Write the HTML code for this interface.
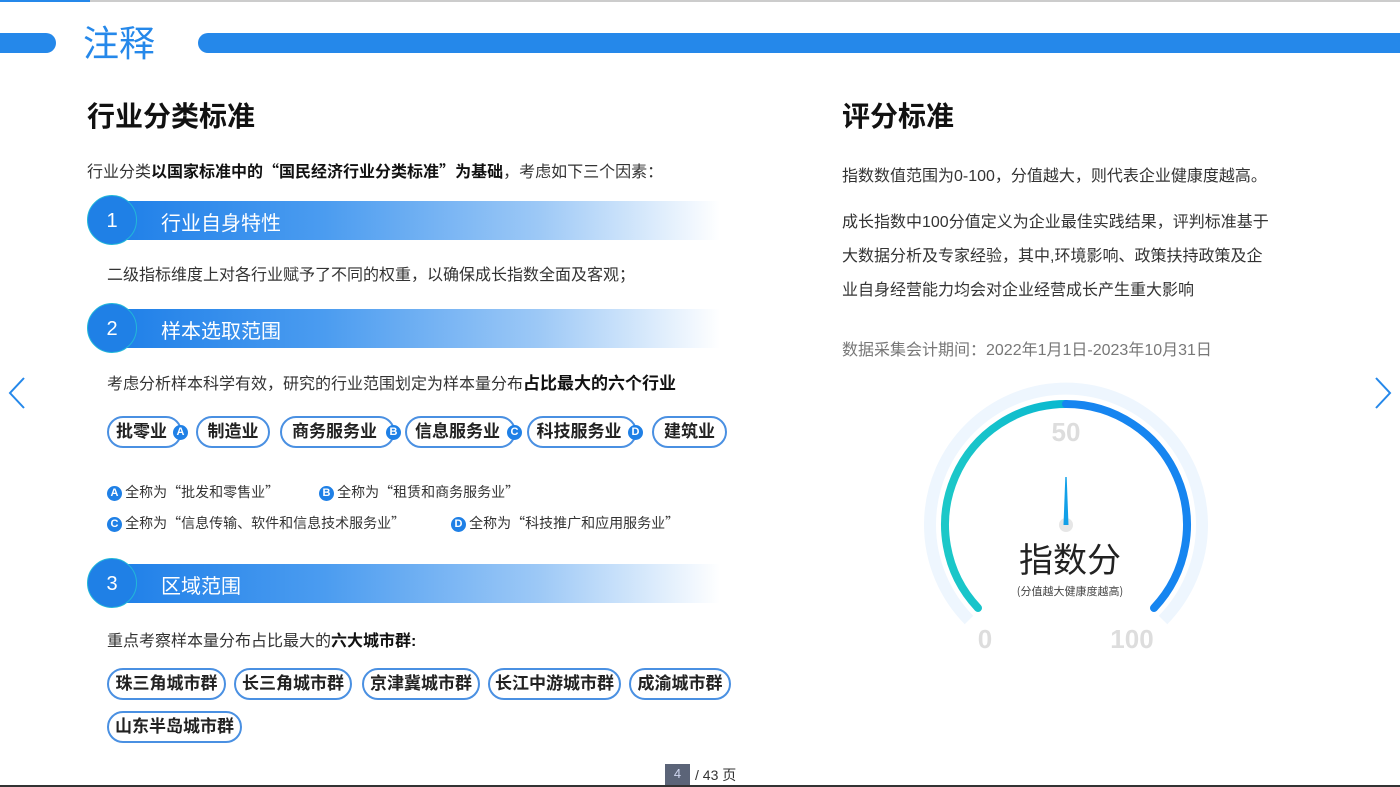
<!DOCTYPE html>
<html><head><meta charset="utf-8"><style>
*{margin:0;padding:0;box-sizing:border-box}
body{width:1400px;height:787px;overflow:hidden;background:#fff;position:relative;font-family:"Liberation Sans","Noto Sans CJK SC",sans-serif;color:#333}
.a{position:absolute;white-space:nowrap}
.h{font-size:28px;font-weight:bold;color:#111}
.p{font-size:16px;color:#333}
.q{font-family:"Noto Sans CJK SC",sans-serif}
.bar{position:absolute;left:112px;width:608px;height:39px;background:linear-gradient(90deg,#1e7fe8 0%,#4b9cf0 35%,#9cc8f6 70%,#fff 100%)}
.num{position:absolute;left:87px;width:50px;height:50px;border-radius:50%;background:#1f80e6;color:#fff;font-size:20px;text-align:center;line-height:50px;border:1px solid #22b8d8}
.bt{position:absolute;left:161px;color:#fff;font-size:20px}
.chip{position:absolute;height:32px;border:2px solid #4a90e2;border-radius:16px;font-size:17px;font-weight:bold;color:#222;text-align:center;line-height:28px}
.bd{display:inline-block;width:15px;height:15px;border-radius:50%;background:#1f80e6;color:#fff;font-size:11px;line-height:15px;text-align:center;font-weight:bold;vertical-align:1px;font-family:"Liberation Sans",sans-serif}
.chip .bd{position:absolute;right:-8px;top:7px}
.n{font-size:14px;color:#333;font-family:"Noto Sans CJK SC",sans-serif}
</style></head><body>
<div class="a" style="left:0;top:0;width:1400px;height:2px;background:#ccc"></div>
<div class="a" style="left:0;top:0;width:90px;height:2px;background:#2588ea"></div>
<div class="a" style="left:0;top:33px;width:56px;height:20px;background:#2588ea;border-radius:0 10px 10px 0"></div>
<div class="a" style="left:198px;top:33px;width:1202px;height:20px;background:#2588ea;border-radius:10px 0 0 10px"></div>
<div class="a" style="left:83px;top:22px;font-size:36px;color:#2588ea;line-height:44px">注释</div>

<div class="a h" style="left:87px;top:95px">行业分类标准</div>
<div class="a p" style="left:87px;top:158px">行业分类<b style="color:#111">以国家标准中的<span class="q">“</span>国民经济行业分类标准<span class="q">”</span>为基础</b>，考虑如下三个因素：</div>

<div class="bar" style="top:201px"></div><div class="num" style="top:195px">1</div><div class="a bt" style="top:207px">行业自身特性</div>
<div class="a p" style="left:107px;top:261px">二级指标维度上对各行业赋予了不同的权重，以确保成长指数全面及客观；</div>

<div class="bar" style="top:309px"></div><div class="num" style="top:303px">2</div><div class="a bt" style="top:315px">样本选取范围</div>
<div class="a p" style="left:107px;top:369px">考虑分析样本科学有效，研究的行业范围划定为样本量分布<b style="color:#111;font-size:17px">占比最大的六个行业</b></div>

<div class="chip" style="left:107px;top:416px;width:75px;padding-right:6px">批零业<span class="bd">A</span></div>
<div class="chip" style="left:196px;top:416px;width:74px">制造业</div>
<div class="chip" style="left:280px;top:416px;width:115px;padding-right:6px">商务服务业<span class="bd">B</span></div>
<div class="chip" style="left:405px;top:416px;width:111px;padding-right:6px">信息服务业<span class="bd">C</span></div>
<div class="chip" style="left:527px;top:416px;width:110px;padding-right:6px">科技服务业<span class="bd">D</span></div>
<div class="chip" style="left:652px;top:416px;width:75px">建筑业</div>

<div class="a n" style="left:107px;top:482px"><span class="bd">A</span> 全称为“批发和零售业”</div>
<div class="a n" style="left:319px;top:482px"><span class="bd">B</span> 全称为“租赁和商务服务业”</div>
<div class="a n" style="left:107px;top:513px"><span class="bd">C</span> 全称为“信息传输、软件和信息技术服务业”</div>
<div class="a n" style="left:451px;top:513px"><span class="bd">D</span> 全称为“科技推广和应用服务业”</div>

<div class="bar" style="top:564px"></div><div class="num" style="top:558px">3</div><div class="a bt" style="top:570px">区域范围</div>
<div class="a p" style="left:107px;top:627px">重点考察样本量分布占比最大的<b style="color:#111">六大城市群:</b></div>

<div class="chip" style="left:107px;top:668px;width:119px">珠三角城市群</div>
<div class="chip" style="left:234px;top:668px;width:118px">长三角城市群</div>
<div class="chip" style="left:362px;top:668px;width:118px">京津冀城市群</div>
<div class="chip" style="left:488px;top:668px;width:133px">长江中游城市群</div>
<div class="chip" style="left:629px;top:668px;width:102px">成渝城市群</div>
<div class="chip" style="left:107px;top:711px;width:135px">山东半岛城市群</div>

<div class="a h" style="left:842px;top:95px">评分标准</div>
<div class="a p" style="left:842px;top:162px">指数数值范围为0-100，分值越大，则代表企业健康度越高。</div>
<div class="a p" style="left:842px;top:206px;line-height:34px">成长指数中100分值定义为企业最佳实践结果，评判标准基于<br>大数据分析及专家经验，其中,环境影响、政策扶持政策及企<br>业自身经营能力均会对企业经营成长产生重大影响</div>
<div class="a p" style="left:842px;top:336px;color:#777">数据采集会计期间：2022年1月1日-2023年10月31日</div>

<svg class="a" style="left:880px;top:370px" width="370" height="300" viewBox="880 370 370 300">
<defs><linearGradient id="g" x1="0" x2="1"><stop offset="0" stop-color="#1cc8c8"/><stop offset="1" stop-color="#0ab8d0"/></linearGradient></defs>
<path d="M969 620 A136 136 0 1 1 1163 620" fill="none" stroke="#eef6fe" stroke-width="12"/>
<path d="M978 608 A121 121 0 0 1 1066 404" fill="none" stroke="url(#g)" stroke-width="8" stroke-linecap="round"/>
<path d="M1066 404 A121 121 0 0 1 1154 608" fill="none" stroke="#1685f0" stroke-width="8" stroke-linecap="round"/>
<circle cx="1066" cy="525" r="7" fill="#e6e6e6"/>
<path d="M1065.3 477 L1066.7 477 L1068.5 525 L1063.5 525 Z" fill="#12a0e8"/>
<text x="1066" y="441" text-anchor="middle" font-size="26" font-weight="bold" fill="#ddd" font-family="Liberation Sans">50</text>
<text x="985" y="648" text-anchor="middle" font-size="26" font-weight="bold" fill="#ddd" font-family="Liberation Sans">0</text>
<text x="1132" y="648" text-anchor="middle" font-size="26" font-weight="bold" fill="#ddd" font-family="Liberation Sans">100</text>
<text x="1070" y="572" text-anchor="middle" font-size="34" fill="#222" font-family="Noto Sans CJK SC">指数分</text>
<text x="1070" y="595" text-anchor="middle" font-size="11" fill="#444" font-family="Noto Sans CJK SC">(分值越大健康度越高)</text>
</svg>

<svg class="a" style="left:6px;top:376px" width="22" height="34"><path d="M18 2 L4 17 L18 32" fill="none" stroke="#2588ea" stroke-width="2"/></svg>
<svg class="a" style="left:1372px;top:376px" width="22" height="34"><path d="M4 2 L18 17 L4 32" fill="none" stroke="#2588ea" stroke-width="2"/></svg>

<div class="a" style="left:665px;top:764px;width:25px;height:21px;background:#5b6478;color:#cfd6f0;font-size:13px;text-align:center;line-height:20px">4</div>
<div class="a" style="left:695px;top:765px;font-size:14px;color:#333">/ 43 页</div>
<div class="a" style="left:0;top:785px;width:1400px;height:2px;background:#333"></div>
</body></html>
